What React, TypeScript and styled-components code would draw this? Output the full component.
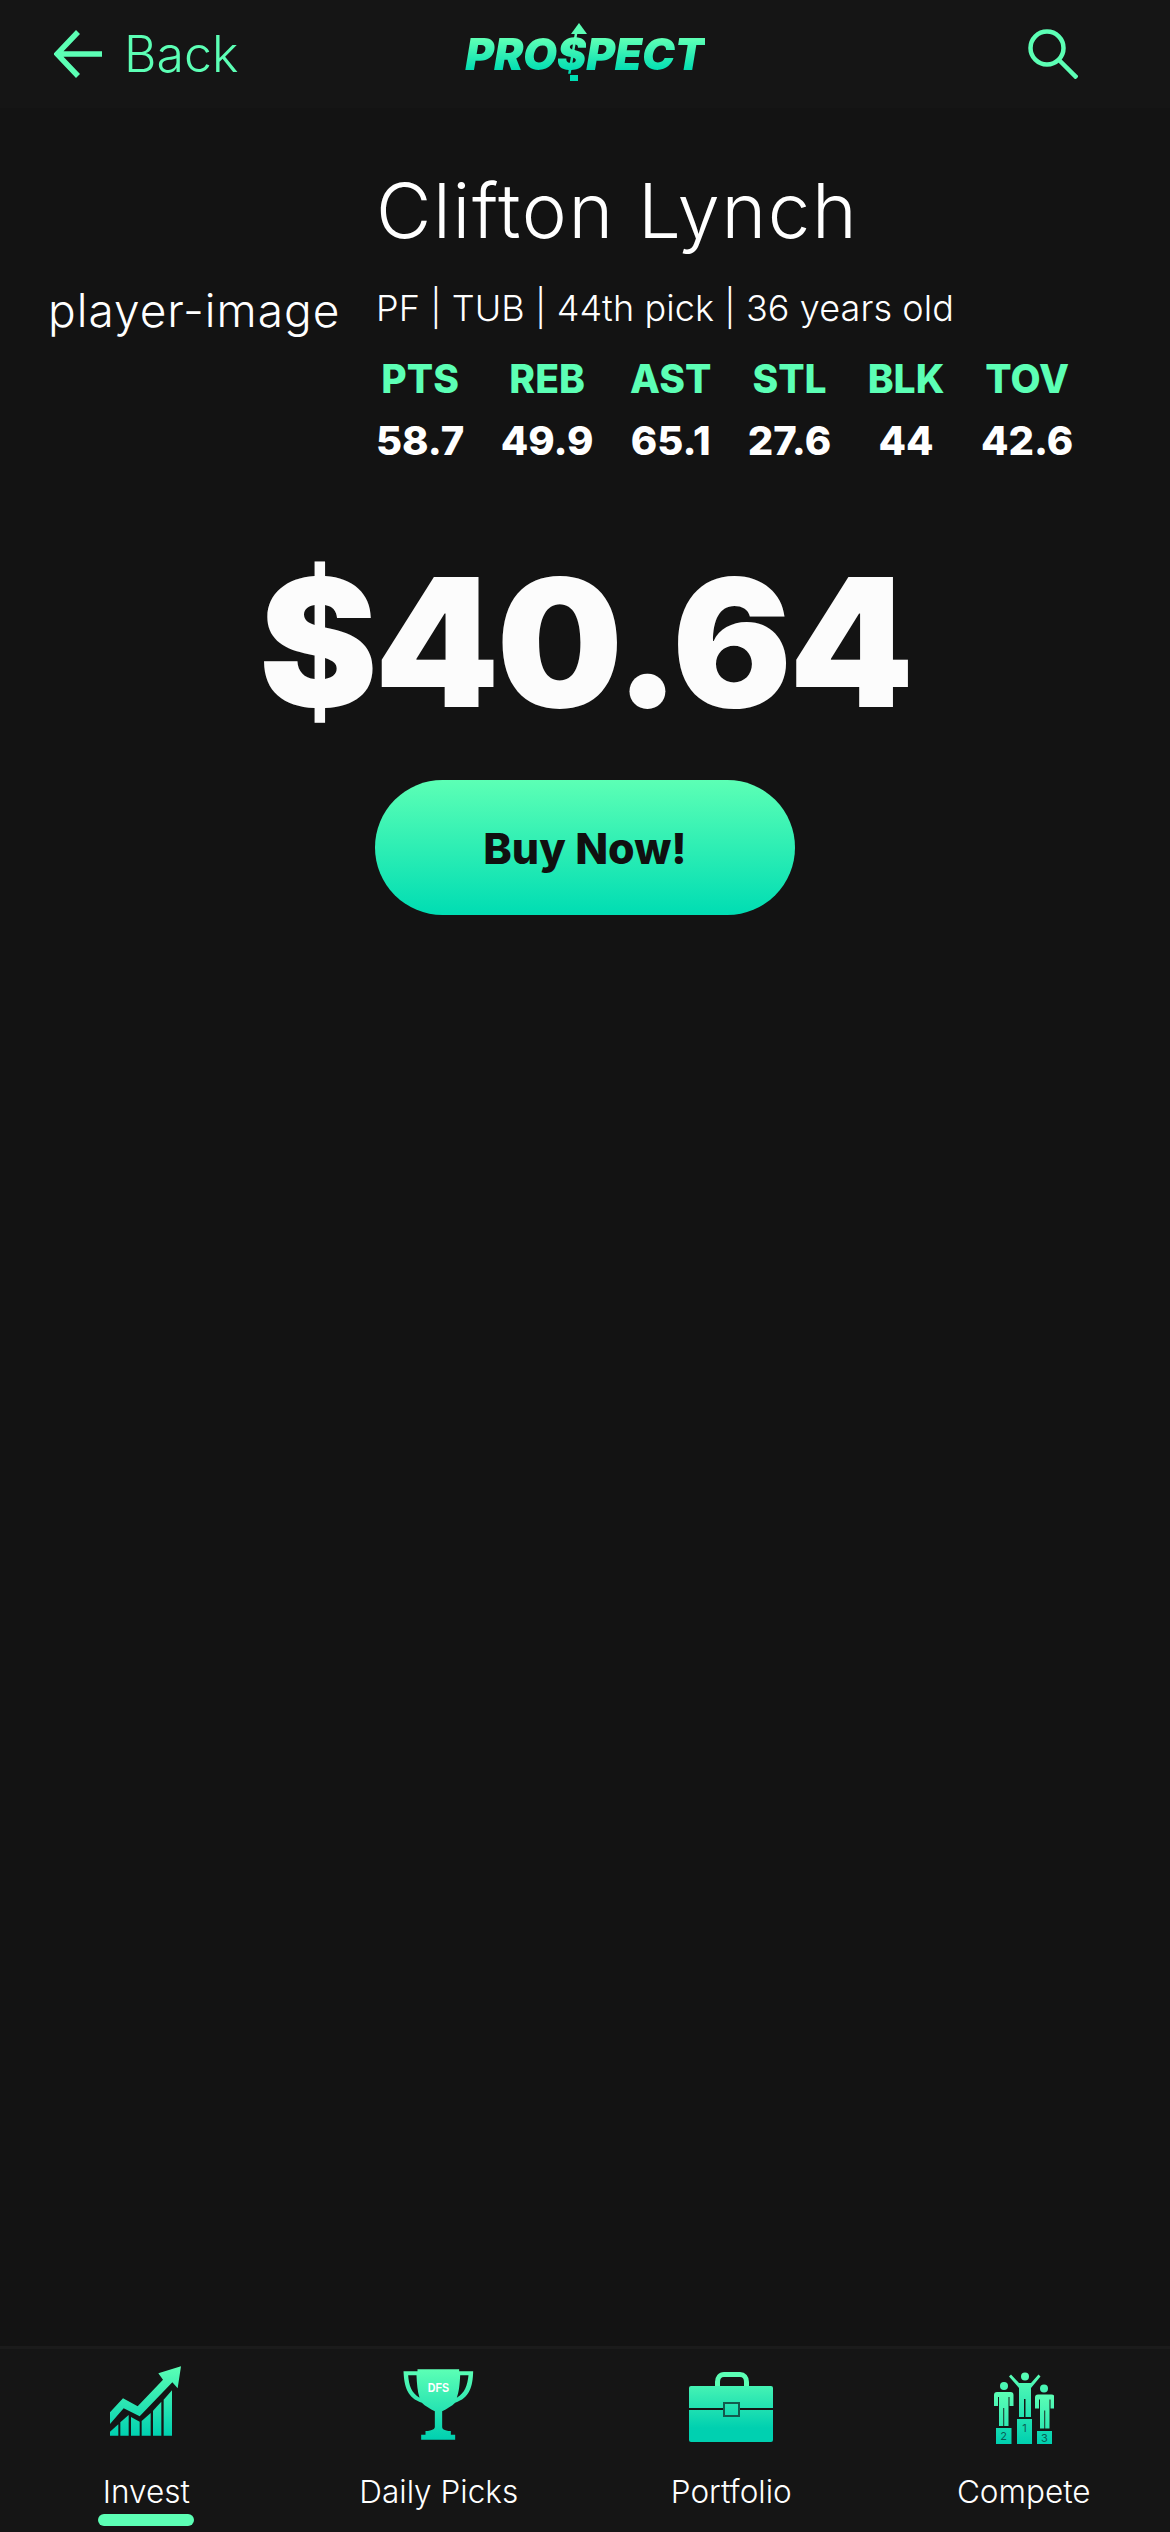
import React from 'react';
import styled, { createGlobalStyle } from 'styled-components';

const GlobalStyle = createGlobalStyle`
  html, body {
    margin: 0;
    padding: 0;
    background: #131313;
  }
  * {
    box-sizing: border-box;
  }
`;

const Screen = styled.div`
  width: 1170px;
  height: 2532px;
  display: flex;
  flex-direction: column;
  background: #131313;
  font-family: Inter, 'Liberation Sans', sans-serif;
  color: #fff;
  overflow: hidden;
`;

const TopBar = styled.header`
  height: 108px;
  display: grid;
  grid-template-columns: 1fr auto 1fr;
  align-items: center;
  padding: 0 54px;
  background: #151515;
`;

const BackLink = styled.div`
  display: flex;
  align-items: center;
  gap: 22px;
  color: #5cffb5;
  font-size: 50px;
  font-weight: 300;
`;

const LogoPart = styled.span`
  display: inline-block;
  background: linear-gradient(180deg, #5cffb5 20%, #00ddb3 85%);
  -webkit-background-clip: text;
  background-clip: text;
  color: transparent;
`;

const Logo = styled.div`
  font-size: 44px;
  font-weight: 900;
  font-style: italic;
  line-height: 48px;
  letter-spacing: -0.2px;
`;

/* the $ of the logo carries an arrow tip above and a stem below */
const LogoDollar = styled(LogoPart)`
  position: relative;
  &::before {
    content: '';
    position: absolute;
    left: 14px;
    top: -7px;
    border-left: 8px solid transparent;
    border-right: 8px solid transparent;
    border-bottom: 11px solid #5cffb5;
  }
  &::after {
    content: '';
    position: absolute;
    left: 13px;
    bottom: -3px;
    width: 8px;
    height: 6px;
    background: #00ddb3;
  }
`;

const SearchButton = styled.div`
  display: flex;
  justify-content: flex-end;
  padding-right: 38px;
`;

const Profile = styled.section`
  display: flex;
  align-items: flex-start;
  padding: 44px 0 0 48px;
`;

const PlayerImage = styled.div`
  width: 328px;
  margin-top: 130px;
  font-size: 46px;
  font-weight: 300;
  line-height: 56px;
  letter-spacing: 1px;
`;

const Details = styled.div`
  display: flex;
  flex-direction: column;
`;

const Name = styled.h1`
  margin: 0;
  font-size: 76px;
  font-weight: 300;
  line-height: 116px;
  letter-spacing: 1.7px;
`;

const Meta = styled.div`
  margin-top: 18px;
  font-size: 36px;
  font-weight: 300;
  line-height: 44px;
  letter-spacing: 0.1px;
`;

const Stats = styled.div`
  display: flex;
  gap: 36.5px;
  margin-top: 26px;
`;

const Stat = styled.div`
  display: flex;
  flex-direction: column;
  align-items: center;
  gap: 16px;
`;

const StatLabel = styled.span`
  color: #5cffb5;
  font-size: 39px;
  font-weight: 800;
  line-height: 46px;
`;

const StatValue = styled.span`
  font-size: 40px;
  font-weight: 800;
  line-height: 46px;
`;

const Price = styled.div`
  margin-top: 73px;
  text-align: center;
  color: #fcfcfc;
  font-size: 178px;
  font-weight: 900;
  line-height: 212px;
  letter-spacing: -3px;
`;

const BuyButton = styled.button`
  align-self: center;
  width: 420px;
  height: 135px;
  margin-top: 31px;
  border: 0;
  border-radius: 68px;
  background: linear-gradient(180deg, #5cffb5 0%, #00ddb3 100%);
  color: #101010;
  font-family: inherit;
  font-size: 43px;
  font-weight: 800;
`;

const TabBar = styled.nav`
  margin-top: auto;
  height: 186px;
  display: grid;
  grid-template-columns: repeat(4, 1fr);
  border-top: 3px solid #1b1b1b;
  background: #151515;
`;

const Tab = styled.div`
  position: relative;
  display: flex;
  flex-direction: column;
  align-items: center;
`;

const TabIcon = styled.div<{ $raise: number }>`
  height: 95px;
  display: flex;
  align-items: flex-end;
  padding-bottom: ${(props) => props.$raise}px;
`;

const TabLabel = styled.span`
  margin-top: 26px;
  font-size: 31.5px;
  font-weight: 300;
  line-height: 44px;
`;

const ActiveBar = styled.span`
  position: absolute;
  left: 50%;
  bottom: 6px;
  width: 96px;
  height: 12px;
  margin-left: -48px;
  border-radius: 6px;
  background: #5cffb5;
`;

const stats = [
  ['PTS', '58.7'],
  ['REB', '49.9'],
  ['AST', '65.1'],
  ['STL', '27.6'],
  ['BLK', '44'],
  ['TOV', '42.6'],
];

function Fade({ id, y1, y2 }: { id: string; y1: number; y2: number }) {
  return (
    <defs>
      <linearGradient id={id} gradientUnits="userSpaceOnUse" x1="0" x2="0" y1={y1} y2={y2}>
        <stop offset="0" stopColor="#5cffb5" />
        <stop offset="1" stopColor="#00d0b0" />
      </linearGradient>
    </defs>
  );
}

function InvestIcon() {
  return (
    <svg width="73" height="71" viewBox="153 111 219 213">
      <Fade id="invest" y1={112} y2={320} />
      <g fill="url(#invest)">
        <path d="M153 250L192 208L236 232L312 152L298 133L366 112L356 178L340 160L242 262L194 238L153 285Z" />
        <path d="M153 320V308L178 286V320Z" />
        <path d="M184 320V280L209 258V320Z" />
        <path d="M216 320V264L242 278V320Z" />
        <path d="M248 320V276L275 252V320Z" />
        <path d="M282 320V245L307 218V320Z" />
        <path d="M314 320V212L339 184V320Z" />
      </g>
    </svg>
  );
}

function TrophyIcon() {
  return (
    <svg width="71" height="71" viewBox="1029 117 212 213">
      <Fade id="trophy" y1={118} y2={329} />
      <path
        fill="url(#trophy)"
        fillRule="evenodd"
        d="M1072 118H1197V124H1239C1238 170 1228 205 1185 218C1175 228 1160 236 1146 244V290C1146 296 1150 302 1172 303V314H1185V329H1083V314H1096V303C1118 302 1124 296 1124 290V244C1110 236 1095 228 1085 218C1042 205 1032 170 1030 124H1072ZM1044 136C1046 165 1054 190 1078 203C1072 185 1070 160 1069 136ZM1225 136H1200C1199 160 1197 185 1190 203C1214 190 1222 165 1225 136Z"
      />
      <text
        x="1135"
        y="185"
        textAnchor="middle"
        fill="#fff"
        fontFamily="'Liberation Sans', sans-serif"
        fontWeight="700"
        fontSize="36"
        textLength="64"
        lengthAdjust="spacingAndGlyphs"
      >
        DFS
      </text>
    </svg>
  );
}

function BriefcaseIcon() {
  return (
    <svg width="84" height="71" viewBox="0 0 84 71">
      <Fade id="case" y1={0} y2={56} />
      <path d="M28.5 15V10C28.5 5.5 31 2.500 35 2.500H51C55 2.500 57.500 5.500 57.500 10V15" fill="none" stroke="#5cffb5" strokeWidth="5" />
      <path fill="url(#case)" d="M2 14H82A2 2 0 0 1 84 16V68A2 2 0 0 1 82 70H2A2 2 0 0 1 0 68V16A2 2 0 0 1 2 14Z" />
      <path d="M0 37H34M50 37H84" stroke="#151515" strokeWidth="2" />
      <rect x="35" y="31" width="15" height="13" fill="none" stroke="#145a4e" strokeWidth="2" />
    </svg>
  );
}

function Person({ x, y }: { x: number; y: number }) {
  return (
    <path
      transform={`translate(${x} ${y})`}
      d="M3 0H16.500Q19.500 0 19.500 3V14H15.500V5H14.500V34H10.200V16H9.300V34H5V5H4V14H0V3Q0 0 3 0Z"
    />
  );
}

function CompeteIcon() {
  return (
    <svg width="60" height="72" viewBox="0 0 60 72">
      <Fade id="compete" y1={0} y2={72} />
      <g fill="url(#compete)">
        <circle cx="31" cy="4.500" r="4" />
        <circle cx="10" cy="14" r="4" />
        <circle cx="50" cy="16.500" r="4" />
        <Person x={0} y={20} />
        <Person x={41} y={22.500} />
        <path d="M15 4.500L17 2.500L25 11H37L44.500 2.500L46.500 4.500L37 16V45H31.500V27H30V45H25V16Z" />
        <rect x="2" y="56" width="15.500" height="16" />
        <rect x="23" y="47" width="15" height="25" />
        <rect x="43" y="59" width="15" height="13" />
      </g>
      <g fill="#0a5f55" fontFamily="Inter, sans-serif" fontSize="11" textAnchor="middle">
        <text x="9.700" y="68">2</text>
        <text x="30.500" y="60">1</text>
        <text x="50.500" y="70">3</text>
      </g>
    </svg>
  );
}

const tabs = [
  { label: 'Invest', icon: <InvestIcon />, raise: 7, active: true },
  { label: 'Daily Picks', icon: <TrophyIcon />, raise: 4, active: false },
  { label: 'Portfolio', icon: <BriefcaseIcon />, raise: 1, active: false },
  { label: 'Compete', icon: <CompeteIcon />, raise: 0, active: false },
];

export default function App() {
  return (
    <Screen>
      <GlobalStyle />
      <TopBar>
        <BackLink>
          <svg width="48" height="48" viewBox="0 0 48 48" fill="none" stroke="#5cffb5" strokeWidth="5.500">
            <path d="M48 24H3M24 2L3 24L24 46" />
          </svg>
          Back
        </BackLink>
        <Logo>
          <LogoPart>PRO</LogoPart>
          <LogoDollar>$</LogoDollar>
          <LogoPart>PECT</LogoPart>
        </Logo>
        <SearchButton>
          <svg width="50" height="50" viewBox="0 0 50 50" fill="none" stroke="#5cffb5" strokeWidth="4.500">
            <circle cx="19" cy="19" r="16.500" />
            <path d="M31 31L49 49" />
          </svg>
        </SearchButton>
      </TopBar>
      <Profile>
        <PlayerImage>player-image</PlayerImage>
        <Details>
          <Name>Clifton Lynch</Name>
          <Meta>PF | TUB | 44th pick | 36 years old</Meta>
          <Stats>
            {stats.map(([label, value]) => (
              <Stat key={label}>
                <StatLabel>{label}</StatLabel>
                <StatValue>{value}</StatValue>
              </Stat>
            ))}
          </Stats>
        </Details>
      </Profile>
      <Price>$40.64</Price>
      <BuyButton>Buy Now!</BuyButton>
      <TabBar>
        {tabs.map((tab) => (
          <Tab key={tab.label}>
            <TabIcon $raise={tab.raise}>{tab.icon}</TabIcon>
            <TabLabel>{tab.label}</TabLabel>
            {tab.active && <ActiveBar />}
          </Tab>
        ))}
      </TabBar>
    </Screen>
  );
}
